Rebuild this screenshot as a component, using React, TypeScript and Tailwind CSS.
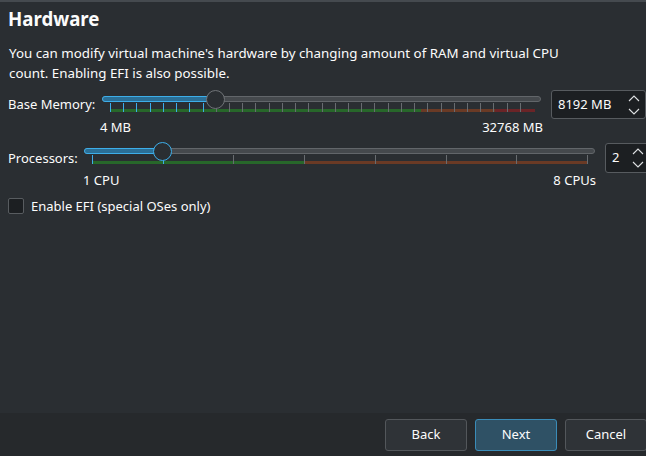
import React from 'react';

type Seg = { from: number; to: number; color: string };

type SliderProps = {
  width: number;
  value: number; // 0..1
  ticks: number[]; // 0..1 positions
  segs: Seg[];
  focused?: boolean;
};

const INSET = 8;

const Slider: React.FC<SliderProps> = ({ width, value, ticks, segs, focused }) => {
  const travel = width - INSET * 2;
  const x = (f: number) => INSET + f * travel;
  const hx = x(value);
  return (
    <div className="relative h-[22px] shrink-0" style={{ width }}>
      {/* groove */}
      <div className="absolute left-0 right-0 top-[6px] h-[6px] rounded-full border border-[#62666a] bg-[#45494d]" />
      <div
        className="absolute left-0 top-[6px] h-[6px] rounded-full border border-[#3daee9] bg-[#2b6f96]"
        style={{ width: hx }}
      />
      {/* colored bar */}
      {segs.map((s, i) => (
        <div
          key={i}
          className="absolute top-[19px] h-[3px]"
          style={{ left: x(s.from), width: x(s.to) - x(s.from), backgroundColor: s.color }}
        />
      ))}
      {/* ticks */}
      {ticks.map((t, i) => (
        <div
          key={i}
          className={`absolute top-[13px] h-[9px] w-px ${t <= value + 0.0001 ? 'bg-[#3daee9]' : 'bg-[#686c70]'}`}
          style={{ left: Math.round(x(t)) }}
        />
      ))}
      {/* handle */}
      <div
        className={`absolute top-0 h-[19px] w-[19px] rounded-full border bg-[#2a2e32] ${focused ? 'border-[#3daee9]' : 'border-[#6f7377]'}`}
        style={{ left: hx - 9.5 }}
      />
    </div>
  );
};

const SpinArrows: React.FC = () => (
  <svg width="14" height="24" viewBox="0 0 14 24" fill="none" stroke="#dfe1e3" strokeWidth="1.1">
    <path d="M2 8 L7 3 L12 8" />
    <path d="M2 16 L7 21 L12 16" />
  </svg>
);

const SpinBox: React.FC<{ text: string; className: string }> = ({ text, className }) => (
  <div
    className={`flex shrink-0 items-center justify-between rounded-[3px] border border-[#575b5f] bg-[#1c1f22] pl-[6px] pr-[4px] ${className}`}
  >
    <span>{text}</span>
    <SpinArrows />
  </div>
);

const Button: React.FC<{ label: string; primary?: boolean }> = ({ label, primary }) => (
  <div
    className={`flex h-[32px] w-[82px] shrink-0 items-center justify-center rounded-[3px] border ${
      primary ? 'border-[#3a8cb8] bg-[#2f5165]' : 'border-[#53575b] bg-[#2f3337]'
    }`}
  >
    {label}
  </div>
);

const MEM_MAX = 32768;
const MEM_MIN = 4;
const memFrac = (mb: number) => (mb - MEM_MIN) / (MEM_MAX - MEM_MIN);
const memTicks = Array.from({ length: 32 }, (_, k) => memFrac(MEM_MIN + k * 1024));
const cpuTicks = Array.from({ length: 8 }, (_, k) => k / 7);

export default function App() {
  return (
    <div
      className="flex h-[456px] w-[646px] flex-col overflow-hidden border-t-2 border-[#454a4f] bg-[#2a2e32] text-[13px] text-[#fcfcfc]"
      style={{ fontFamily: '"Noto Sans", "Open Sans", sans-serif' }}
    >
      <div className="flex flex-1 flex-col pl-[8px]">
        <h1 className="mt-[5px] text-[18.67px] font-bold leading-[24px]">Hardware</h1>
        <p className="mt-[12px] pl-px text-[13.33px] leading-[20px]">
          You can modify virtual machine's hardware by changing amount of RAM and virtual CPU
          <br />
          count. Enabling EFI is also possible.
        </p>

        {/* memory */}
        <div className="mt-[7px] flex h-[29px] items-start">
          <span className="mt-[5px] w-[94px] shrink-0 leading-[18px]">Base Memory:</span>
          <Slider
            width={439}
            value={memFrac(8192)}
            ticks={memTicks}
            segs={[
              { from: 0, to: 0.735, color: '#27672a' },
              { from: 0.735, to: 0.91, color: '#6a3a25' },
              { from: 0.91, to: 1.005, color: '#6b2427' },
            ]}
          />
          <SpinBox text="8192 MB" className="ml-[10px] h-[29px] w-[95px]" />
        </div>
        <div className="-mt-px flex w-[535px] justify-between pl-[92px] leading-[18px]">
          <span>4 MB</span>
          <span>32768 MB</span>
        </div>

        {/* processors */}
        <div className="mt-[6px] flex h-[29px] items-start">
          <span className="mt-[7px] w-[76px] shrink-0 leading-[18px]">Processors:</span>
          <Slider
            width={511}
            value={1 / 7}
            focused
            ticks={cpuTicks}
            segs={[
              { from: 0, to: 3 / 7, color: '#27672a' },
              { from: 3 / 7, to: 1, color: '#6a3a25' },
            ]}
          />
          <SpinBox text="2" className="ml-[10px] mt-px h-[30px] w-[45px]" />
        </div>
        <div className="flex w-[588px] justify-between pl-[75px] leading-[18px]">
          <span>1 CPU</span>
          <span>8 CPUs</span>
        </div>

        <label className="mt-[8px] flex items-center gap-[7px]">
          <span className="h-[16px] w-[16px] shrink-0 rounded-[2px] border border-[#585c60] bg-[#1c1f22]" />
          <span className="leading-[18px]">Enable EFI (special OSes only)</span>
        </label>
      </div>

      {/* footer */}
      <div className="flex h-[43px] w-[647px] shrink-0 items-start justify-end gap-[8px] bg-[#26292c] pt-[6px]">
        <Button label="Back" />
        <Button label="Next" primary />
        <Button label="Cancel" />
      </div>
    </div>
  );
}
